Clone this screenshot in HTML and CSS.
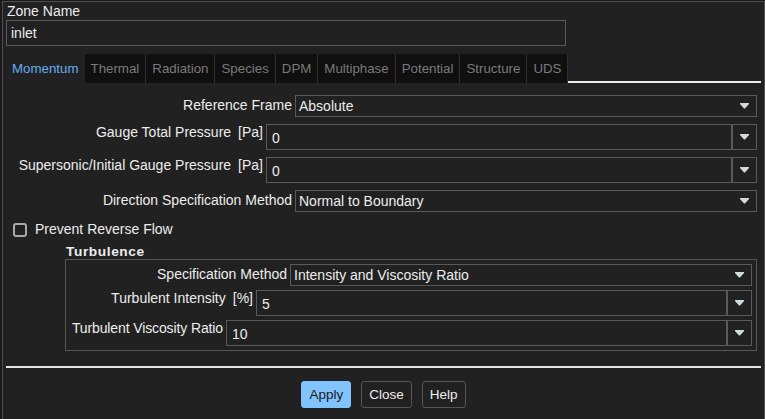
FILE: index.html
```html
<!DOCTYPE html>
<html>
<head>
<meta charset="utf-8">
<link rel="stylesheet" href="styles.css">
</head>
<body>
<div class="window">
  <div class="zone-label">Zone Name</div>
  <div class="text-input zone-input">inlet</div>

  <div class="tabbar">
    <div class="tab active">Momentum</div>
    <div class="tab">Thermal</div>
    <div class="tab">Radiation</div>
    <div class="tab">Species</div>
    <div class="tab">DPM</div>
    <div class="tab">Multiphase</div>
    <div class="tab">Potential</div>
    <div class="tab">Structure</div>
    <div class="tab">UDS</div>
    <div class="tab-fill"></div>
  </div>

  <div class="form">
    <div class="row">
      <div class="lbl lbl-main-wide">Reference Frame</div>
      <div class="combo"><span class="val">Absolute</span><svg class="arrow" width="9" height="6" viewBox="0 0 9 6"><path d="M0 0H9V1L5 5.5H4L0 1Z"/></svg></div>
    </div>
    <div class="row row-entry">
      <div class="lbl lbl-main-narrow">Gauge Total Pressure<span class="unit">[Pa]</span></div>
      <div class="spin">
        <div class="entry">0</div>
        <div class="entry-btn"><svg class="arrow" width="9" height="6" viewBox="0 0 9 6"><path d="M0 0H9V1L5 5.5H4L0 1Z"/></svg></div>
      </div>
    </div>
    <div class="row row-entry">
      <div class="lbl lbl-main-narrow">Supersonic/Initial Gauge Pressure<span class="unit">[Pa]</span></div>
      <div class="spin">
        <div class="entry">0</div>
        <div class="entry-btn"><svg class="arrow" width="9" height="6" viewBox="0 0 9 6"><path d="M0 0H9V1L5 5.5H4L0 1Z"/></svg></div>
      </div>
    </div>
    <div class="row">
      <div class="lbl lbl-main-wide">Direction Specification Method</div>
      <div class="combo"><span class="val">Normal to Boundary</span><svg class="arrow" width="9" height="6" viewBox="0 0 9 6"><path d="M0 0H9V1L5 5.5H4L0 1Z"/></svg></div>
    </div>

    <div class="check-row">
      <span class="check"></span>
      <span class="check-text">Prevent Reverse Flow</span>
    </div>

    <div class="group-title">Turbulence</div>
    <div class="group">
      <div class="row">
        <div class="lbl lbl-grp-1">Specification Method</div>
        <div class="combo"><span class="val">Intensity and Viscosity Ratio</span><svg class="arrow" width="9" height="6" viewBox="0 0 9 6"><path d="M0 0H9V1L5 5.5H4L0 1Z"/></svg></div>
      </div>
      <div class="row row-entry">
        <div class="lbl lbl-grp-2">Turbulent Intensity<span class="unit">[%]</span></div>
        <div class="spin">
          <div class="entry">5</div>
          <div class="entry-btn"><svg class="arrow" width="9" height="6" viewBox="0 0 9 6"><path d="M0 0H9V1L5 5.5H4L0 1Z"/></svg></div>
        </div>
      </div>
      <div class="row row-entry">
        <div class="lbl lbl-grp-3">Turbulent Viscosity Ratio</div>
        <div class="spin">
          <div class="entry">10</div>
          <div class="entry-btn"><svg class="arrow" width="9" height="6" viewBox="0 0 9 6"><path d="M0 0H9V1L5 5.5H4L0 1Z"/></svg></div>
        </div>
      </div>
    </div>
  </div>

  <div class="separator"></div>

  <div class="buttons">
    <button class="btn btn-primary">Apply</button>
    <button class="btn">Close</button>
    <button class="btn">Help</button>
  </div>
</div>
</body>
</html>
```

FILE: styles.css
```css
html, body {
  margin: 0;
  padding: 0;
}

body {
  background: #1a1a1a;
  font-family: "Liberation Sans", Arial, sans-serif;
  font-size: 14px;
  color: #ededed;
  overflow: hidden;
}

.window {
  margin: 1px 0 0 2px;
  height: 418px;
  box-sizing: border-box;
  border: 1px solid #4e4e4e;
  border-bottom: none;
  background: #212121;
  padding-top: 1px;
  display: flex;
  flex-direction: column;
}

.zone-label {
  margin-left: 4px;
  line-height: 17px;
  height: 17px;
}

.text-input {
  box-sizing: border-box;
  border: 1px solid #5a5a5a;
}

.zone-input {
  margin-left: 3px;
  width: 560px;
  height: 26px;
  line-height: 24px;
  padding-left: 4px;
}

/* Tabs */
.tabbar {
  margin: 8px 3px 0 3px;
  height: 29px;
  display: flex;
}

.tab {
  padding: 0 6px;
  line-height: 29px;
  font-size: 13.3px;
  background: #0f0f0f;
  color: #7a7a7a;
  border-right: 1px solid #2e2e2e;
  white-space: nowrap;
}

.tab.active {
  background: transparent;
  color: #62aef2;
  border-right: none;
}

.tab-fill {
  flex: 1;
  border-bottom: 2px solid #ececec;
}

/* Form */
.form {
  margin-top: 12px;
  padding: 0 7px;
  display: flex;
  flex-direction: column;
  gap: 7px;
}

.row {
  display: flex;
  align-items: flex-start;
  gap: 3px;
}

.lbl {
  text-align: right;
  white-space: nowrap;
  line-height: 16px;
  padding-top: 2px;
  flex: none;
}

.row-entry .lbl {
  padding-top: 0;
}

.unit {
  margin-left: 7px;
}

.lbl-main-wide { width: 282px; }
.lbl-main-narrow { width: 253px; }
.lbl-grp-1 { width: 216px; }
.lbl-grp-2 { width: 182px; }
.lbl-grp-3 { width: 152px; letter-spacing: -0.12px; }

.combo {
  flex: 1;
  height: 22px;
  box-sizing: border-box;
  border: 1px solid #5a5a5a;
  display: flex;
  align-items: center;
  padding-left: 3px;
}

.val {
  flex: 1;
  line-height: 18px;
  white-space: nowrap;
}

.arrow {
  display: block;
  fill: #d4d9de;
}

.combo .arrow {
  margin-right: 7px;
}

.spin {
  flex: 1;
  display: flex;
  height: 26px;
}

.entry {
  flex: 1;
  box-sizing: border-box;
  border: 1px solid #5a5a5a;
  line-height: 24px;
  padding-left: 5px;
  padding-top: 1px;
}

.entry-btn {
  width: 25px;
  box-sizing: border-box;
  border: 1px solid #5a5a5a;
  display: flex;
  align-items: center;
  justify-content: center;
}

/* Checkbox */
.check-row {
  margin-top: 4px;
  margin-left: 3px;
  height: 13px;
  display: flex;
  align-items: center;
}

.check {
  width: 14px;
  height: 14px;
  box-sizing: border-box;
  border: 2px solid #a9a9a9;
  border-radius: 3px;
  flex: none;
}

.check-text {
  margin-left: 8px;
  line-height: 13px;
}

/* Group */
.group-title {
  margin-top: 1px;
  margin-left: 56px;
  font-weight: bold;
  font-size: 13.7px;
  letter-spacing: 0.6px;
  line-height: 15px;
}

.group {
  margin-top: -7px;
  margin-left: 55px;
  border: 1px solid #555555;
  padding: 4px 4px 4px 5px;
  display: flex;
  flex-direction: column;
  gap: 4px;
}

/* Bottom */
.separator {
  margin: 15px 3px 0 3px;
  height: 2px;
  background: #e6e6e6;
}

.buttons {
  margin-top: 13px;
  display: flex;
  justify-content: center;
  gap: 10px;
}

.btn {
  height: 27px;
  padding: 0 7px;
  box-sizing: border-box;
  border: 1px solid #555555;
  border-radius: 3px;
  background: transparent;
  color: #ededed;
  font-family: "Liberation Sans", Arial, sans-serif;
  font-size: 13.5px;
}

.btn-primary {
  background: #80c4fb;
  border-color: #80c4fb;
  color: #1b1b1b;
}
```
